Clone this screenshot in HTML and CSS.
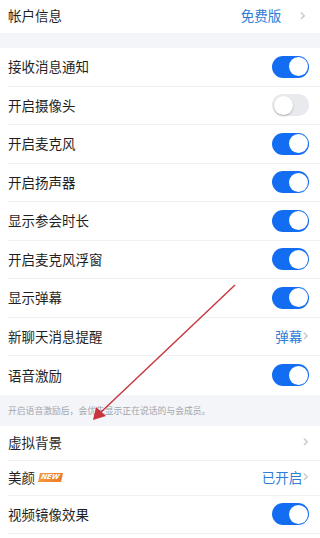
FILE: index.html
```html
<!DOCTYPE html>
<html lang="zh-CN">
<head>
<meta charset="utf-8">
<link rel="stylesheet" href="styles.css">
</head>
<body>
<div class="page">
  <div class="row top">
    <span class="label">帐户信息</span>
    <span class="value">免费版</span>
    <span class="chev wide">&#x203A;</span>
  </div>
  <div class="gap"></div>
  <div class="group">
    <div class="row"><span class="label">接收消息通知</span><span class="toggle on"></span></div>
    <div class="row"><span class="label">开启摄像头</span><span class="toggle"></span></div>
    <div class="row"><span class="label">开启麦克风</span><span class="toggle on"></span></div>
    <div class="row"><span class="label">开启扬声器</span><span class="toggle on"></span></div>
    <div class="row"><span class="label">显示参会时长</span><span class="toggle on"></span></div>
    <div class="row"><span class="label">开启麦克风浮窗</span><span class="toggle on"></span></div>
    <div class="row"><span class="label">显示弹幕</span><span class="toggle on"></span></div>
    <div class="row"><span class="label">新聊天消息提醒</span><span class="value">弹幕</span><span class="chev">&#x203A;</span></div>
    <div class="row last"><span class="label">语音激励</span><span class="toggle on"></span></div>
  </div>
  <div class="note">开启语音激励后，会优先显示正在说话的与会成员。</div>
  <div class="group">
    <div class="row short"><span class="label">虚拟背景</span><span class="chev">&#x203A;</span></div>
    <div class="row short"><span class="label">美颜</span><span class="badge">NEW</span><span class="value">已开启</span><span class="chev">&#x203A;</span></div>
    <div class="row"><span class="label">视频镜像效果</span><span class="toggle on"></span></div>
  </div>
  <svg class="arrow" width="320" height="538" viewBox="0 0 320 538">
    <line x1="235" y1="285" x2="99" y2="414" stroke="#c9343c" stroke-width="1.4"/>
    <polygon points="93,420 96,407 106,416" fill="#c9343c"/>
  </svg>
</div>
</body>
</html>
```

FILE: styles.css
```css
* { box-sizing: border-box; }
html, body { margin: 0; padding: 0; }
body {
  background: #fff;
  font-family: "Noto Sans CJK SC", "Noto Sans", sans-serif;
  color: #222;
}
.page {
  position: relative;
  width: 320px;
  height: 538px;
  overflow: hidden;
  background: #fff;
}
.row {
  display: flex;
  align-items: center;
  height: 38.5px;
  margin-left: 8px;
  padding-right: 11px;
  border-bottom: 1px solid #f0f1f3;
}
.row.top {
  height: 33px;
  border-bottom: none;
  padding-bottom: 1px;
}
.row.last { border-bottom: none; }
.row.short { height: 35px; }
.label {
  font-size: 13.5px;
  line-height: 1;
  color: #1f1f1f;
}
.value {
  margin-left: auto;
  font-size: 13.5px;
  line-height: 1;
  color: #2f7dd6;
}
.row .chev {
  margin-left: auto;
  color: #c5c7cc;
  font-family: "DejaVu Sans", sans-serif;
  font-size: 17px;
  line-height: 1;
  padding-bottom: 2px;
}
.value + .chev { margin-left: 0; }
.chev.wide { margin-left: 18px !important; margin-right: 3px; }
.gap {
  height: 15px;
  background: #f4f5f8;
}
.toggle {
  margin-left: auto;
  width: 37px;
  height: 22px;
  border-radius: 11px;
  background: #e9eaee;
  position: relative;
  flex: none;
}
.toggle::after {
  content: "";
  position: absolute;
  top: 1.5px;
  left: 1.5px;
  width: 19px;
  height: 19px;
  border-radius: 50%;
  background: #fff;
  box-shadow: 0 1px 2px rgba(0,0,0,0.25);
}
.toggle.on { background: #136df2; }
.toggle.on::after { left: 16.5px; box-shadow: none; }
.note {
  height: 31px;
  background: #f4f5f8;
  padding-left: 8px;
  display: flex;
  align-items: center;
  font-size: 8.8px;
  color: #a3a6ad;
}
.badge {
  margin-left: 4px;
  padding: 0 3px 0 2px;
  height: 9px;
  line-height: 9px;
  font-family: "DejaVu Sans", sans-serif;
  font-size: 7px;
  font-weight: bold;
  font-style: italic;
  color: #fff;
  background: linear-gradient(90deg, #f39a3e, #ee7a2b);
  transform: skewX(-12deg);
}
.arrow {
  position: absolute;
  left: 0;
  top: 0;
  pointer-events: none;
}
```
